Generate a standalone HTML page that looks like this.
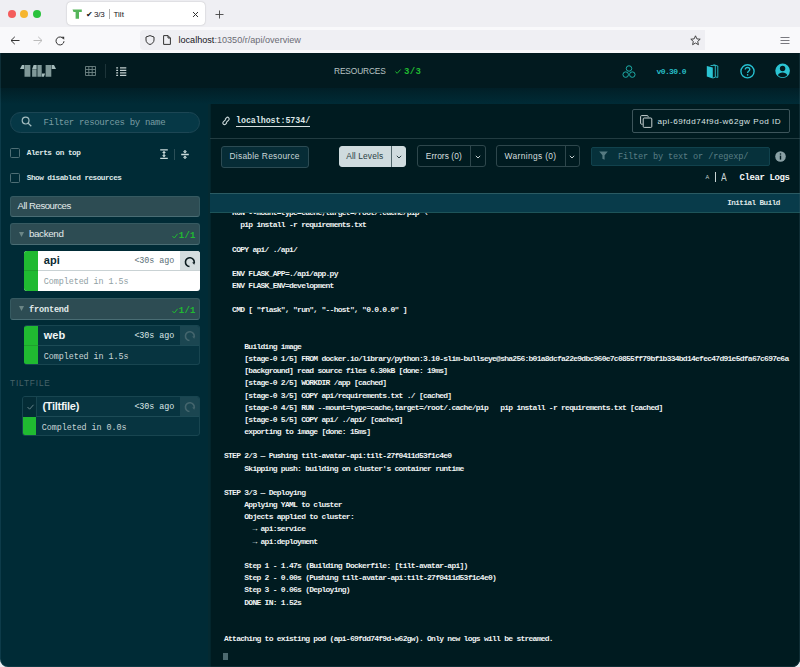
<!DOCTYPE html>
<html><head><meta charset="utf-8">
<style>
*{box-sizing:border-box;margin:0;padding:0}
html,body{width:800px;height:667px;overflow:hidden;background:#ececf0}
body{position:relative;font-family:"Liberation Sans",sans-serif}
.abs{position:absolute}
.mono{font-family:"Liberation Mono",monospace}
svg{position:absolute;overflow:visible}
#tabstrip{left:0;top:0;width:800px;height:27px;background:#efeff3}
.tl{position:absolute;top:9.5px;width:8px;height:8px;border-radius:50%}
#tab{left:67px;top:2px;width:138px;height:23px;background:#fff;border-radius:4px;box-shadow:0 0 1.5px rgba(0,0,0,.3)}
#toolbar{left:0;top:27px;width:800px;height:26px;background:#f9f9fb}
#url{left:140px;top:30px;width:565px;height:20px;background:#efeff3;border-radius:4px 0 0 4px}
.t{position:absolute;white-space:pre;line-height:1}
#app{left:0;top:53px;width:800px;height:614px;background:#002b36;border-radius:0 0 8px 8px;overflow:hidden}
#hdr{left:0;top:0;width:800px;height:35px;background:#021a1f}
#shadow{left:0;top:35px;width:800px;height:16px;background:linear-gradient(#011f27,#002b36)}
#side{left:0;top:35px;width:210px;height:579px}
#pane{left:210px;top:51px;width:590px;height:563px;background:#001b20}

.cb{position:absolute;width:10px;height:10px;border:1.2px solid #4e6e75;border-radius:1.5px}
.lbl{position:absolute;white-space:pre;line-height:1;font-family:"Liberation Mono",monospace;color:#e6eded}
.grp{position:absolute;left:10px;width:190px;height:22.5px;background:#2d4c53;border:1px solid #365a61;border-bottom-color:#4a6d74;border-radius:3px}
.card{position:absolute;width:176px;height:40px;border-radius:3px;overflow:hidden}
.gbar{position:absolute;left:0;width:14px;background:#20ba31}

.btn{position:absolute;border:1px solid #2f4a50;border-radius:3px}
.chev{position:absolute}
#log{position:absolute;left:14px;top:0;font-family:"Liberation Mono",monospace;font-size:8px;letter-spacing:-0.74px;line-height:12.165px;white-space:pre;color:#eef2f2;font-weight:bold}
</style></head><body>
<div id="tabstrip" class="abs">
  <div class="tl" style="left:8px;background:#f45c5c"></div>
  <div class="tl" style="left:20px;background:#f6b52e"></div>
  <div class="tl" style="left:33px;background:#2ac23c"></div>
</div>
<div id="tab" class="abs">
  <svg style="left:5px;top:7px" width="10" height="10" viewBox="0 0 10 10"><path d="M0.5 0.5 H9.8 V3 H7 V9.8 H3.6 V3 H1.5 Z" fill="#55b55a"/></svg>
  <div class="t" style="left:18.5px;top:8.5px;font-size:8px;color:#15141a">✔</div>
  <div class="t" id="tabtxt" style="left:27px;top:8.5px;font-size:8px;color:#15141a;letter-spacing:-0.2px">3/3</div>
  <div class="abs" style="left:41.5px;top:7px;width:1px;height:10px;background:#b0b0b0"></div>
  <div class="t" style="left:46.5px;top:8.5px;font-size:8px;color:#15141a">Tilt</div>
  <svg style="left:125px;top:9px" width="7" height="7" viewBox="0 0 7 7"><path d="M1 1L6 6M6 1L1 6" stroke="#333" stroke-width="1"/></svg>
</div>
<svg style="left:215px;top:10px" width="9" height="9" viewBox="0 0 9 9"><path d="M4.5 0.5V8.5M0.5 4.5H8.5" stroke="#444" stroke-width="0.9"/></svg>
<div id="toolbar" class="abs"></div>
<svg style="left:10px;top:36px" width="10" height="9" viewBox="0 0 10 9"><path d="M9.5 4.5H1M4.8 0.8L1 4.5L4.8 8.2" stroke="#333" stroke-width="1" fill="none"/></svg>
<svg style="left:33px;top:36px" width="10" height="9" viewBox="0 0 10 9"><path d="M0.5 4.5H9M5.2 0.8L9 4.5L5.2 8.2" stroke="#bbb" stroke-width="1" fill="none"/></svg>
<svg style="left:55px;top:36px" width="10" height="10" viewBox="0 0 10 10"><path d="M8.6 3.2A4 4 0 1 0 9 5.2" stroke="#333" stroke-width="1" fill="none"/><path d="M6.5 0.8L9.2 0.8L9.2 3.6Z" fill="#333"/></svg>
<div id="url" class="abs">
  <svg style="left:5px;top:5px" width="10" height="10" viewBox="0 0 10 10"><path d="M5 0.6L9 2V5C9 7.3 7.2 8.8 5 9.5C2.8 8.8 1 7.3 1 5V2Z" stroke="#333" stroke-width="1" fill="none"/></svg>
  <svg style="left:23px;top:5px" width="8" height="10" viewBox="0 0 8 10"><path d="M0.6 0.6H5L7.4 3V9.4H0.6Z M5 0.6V3H7.4" stroke="#333" stroke-width="1" fill="none"/></svg>
  <div class="t" id="urltxt" style="left:38.5px;top:6px;font-size:9.1px;color:#15141a">localhost<span style="color:#6b6b74">:10350/r/api/overview</span></div>
  <svg style="left:550px;top:5px" width="11" height="11" viewBox="0 0 11 11"><path d="M5.5 0.8L6.9 3.9L10.2 4.2L7.7 6.4L8.4 9.7L5.5 8L2.6 9.7L3.3 6.4L0.8 4.2L4.1 3.9Z" stroke="#333" stroke-width="0.9" fill="none" stroke-linejoin="round"/></svg>
</div>
<svg style="left:780px;top:36px" width="10" height="9" viewBox="0 0 10 9"><path d="M0.5 1.5H9.5M0.5 4.5H9.5M0.5 7.5H9.5" stroke="#6a6a70" stroke-width="0.9"/></svg>
<div id="app" class="abs">
  <div id="hdr" class="abs">
    <svg style="left:19.8px;top:12px" width="36" height="12" viewBox="0 0 36 12">
      <path d="M0 3.9H4.1V0H2Z" fill="#a5bcbc"/><path d="M4.5 0H10.4V11.8H4.5Z" fill="#7f9898"/>
      <path d="M12.1 3.9H16.6V0H13.6Z" fill="#a5bcbc"/><path d="M12.1 4.3H16.6V11.8H12.1Z" fill="#7f9898"/>
      <path d="M17.4 0H21.7V11.8H17.4Z" fill="#7f9898"/><path d="M22 11.8V8.6H25.1L23.9 11.8Z" fill="#a5bcbc"/>
      <path d="M25.6 0H31.3V11.8H25.6Z" fill="#7f9898"/><path d="M31.7 0H34L36 3.9H31.7Z" fill="#a5bcbc"/>
    </svg>
    <svg style="left:85px;top:12.8px" width="11" height="10" viewBox="0 0 11 10"><path d="M0.5 0.5H10.5V9.5H0.5Z M3.8 0.5V9.5 M7.2 0.5V9.5 M0.5 3.5H10.5 M0.5 6.5H10.5" stroke="#6f8585" stroke-width="0.9" fill="none"/></svg>
    <div class="abs" style="left:105px;top:11px;width:1px;height:14px;background:#1d3439"></div>
    <svg style="left:116px;top:13.5px" width="11" height="10" viewBox="0 0 11 10"><path d="M0.2 0.9H2.1M4 0.9H10.3M0.2 3.4H2.1M4 3.4H10.3M0.2 5.9H2.1M4 5.9H10.3M0.2 8.4H2.1M4 8.4H10.3" stroke="#c4d0d0" stroke-width="1.2" fill="none"/></svg>
    <div class="t" id="restxt" style="left:334px;top:13.6px;font-size:8.4px;color:#b9c4c4;letter-spacing:-0.15px">RESOURCES</div>
    <svg style="left:395px;top:16px" width="6" height="5" viewBox="0 0 6 5"><path d="M0.4 2.6L2.2 4.3L5.6 0.5" stroke="#20ba31" stroke-width="1" fill="none"/></svg>
    <div class="t mono" id="res33" style="left:404px;top:14.5px;font-size:9px;font-weight:bold;color:#20ba31;letter-spacing:0.3px">3/3</div>
    <svg style="left:622px;top:11.5px" width="14" height="14" viewBox="0 0 14 14"><circle cx="7" cy="3.5" r="2.75" stroke="#1fb3ae" stroke-width="0.95" fill="none"/><circle cx="3.7" cy="9.6" r="2.75" stroke="#1fb3ae" stroke-width="0.95" fill="none"/><circle cx="10.3" cy="9.6" r="2.75" stroke="#1fb3ae" stroke-width="0.95" fill="none"/></svg>
    <div class="t mono" id="ver" style="left:656.5px;top:14.7px;font-size:8px;font-weight:bold;color:#27bdc6;letter-spacing:-0.6px">v0.30.0</div>
    <svg style="left:706px;top:11px" width="13" height="15" viewBox="0 0 13 15"><path d="M4.5 1.6L9.3 1.2V13.2L7 14" stroke="#2fc2cf" stroke-width="0.9" fill="none"/><path d="M7.5 0.8L11.8 2V13.4L9.6 13" stroke="#2fc2cf" stroke-width="0.9" fill="none"/><path d="M0.8 2L6.8 3.6V14.6L0.8 12.6Z" fill="#2bc4d3"/></svg>
    <svg style="left:740px;top:11px" width="15" height="15" viewBox="0 0 15 15"><circle cx="7.5" cy="7.3" r="6.6" stroke="#26bfcf" stroke-width="1.4" fill="none"/><path d="M5.2 5.6C5.2 4.2 6.2 3.5 7.5 3.5C8.8 3.5 9.8 4.3 9.8 5.5C9.8 6.9 7.6 7.1 7.6 8.9" stroke="#26bfcf" stroke-width="1.3" fill="none"/><circle cx="7.6" cy="10.9" r="0.8" fill="#26bfcf"/></svg>
    <svg style="left:775px;top:10px" width="16" height="16" viewBox="0 0 16 16"><circle cx="7.6" cy="7.8" r="7.3" fill="#2bc4d3"/><circle cx="7.6" cy="5.5" r="2.7" fill="#021a1f"/><path d="M2.9 12.2C3.6 10.5 5.4 9.5 7.6 9.5C9.8 9.5 11.6 10.5 12.3 12.2A6.2 6.2 0 0 1 2.9 12.2Z" fill="#021a1f"/></svg>
  </div>
  <div id="shadow" class="abs"></div>
  <div id="side" class="abs">
    <div class="abs" style="left:10px;top:24px;width:190px;height:21px;border-radius:11px;background:#063846;border:1px solid #1c4654"></div>
    <svg style="left:21px;top:28px" width="12" height="12" viewBox="0 0 12 12"><circle cx="4.6" cy="4.6" r="3.4" stroke="#a3bcbf" stroke-width="1.2" fill="none"/><path d="M7.1 7.1L10.3 10.3" stroke="#a3bcbf" stroke-width="1.3"/></svg>
    <div class="lbl" id="filt" style="left:43.5px;top:31px;font-size:9px;letter-spacing:-0.33px;color:#7a9da3">Filter resources by name</div>
    <div class="cb" style="left:10px;top:60px"></div>
    <div class="lbl" id="alerts" style="left:26.8px;top:62px;font-size:7.7px;letter-spacing:-0.5px;font-weight:bold;color:#dfe8e8">Alerts on top</div>
    <svg style="left:160px;top:61px" width="8" height="10" viewBox="0 0 8 10"><path d="M0.2 0.8H7.8M0.2 9.4H7.8M4 3V7" stroke="#c9dada" stroke-width="1.2" fill="none"/><path d="M4 1.8L2.1 3.9H5.9Z M4 8.4L2.1 6.3H5.9Z" fill="#c9dada"/></svg>
    <div class="abs" style="left:174px;top:61px;width:1px;height:11px;background:#2a4e57"></div>
    <svg style="left:181px;top:62px" width="8" height="9" viewBox="0 0 8 9"><path d="M0.2 4.5H7.8M4 0V1.6M4 7.4V9" stroke="#c9dada" stroke-width="1.3" fill="none"/><path d="M4 3.5L1.8 1.2H6.2Z M4 5.5L1.8 7.8H6.2Z" fill="#c9dada"/></svg>
    <div class="cb" style="left:10px;top:84.5px"></div>
    <div class="lbl" id="showdis" style="left:26.8px;top:86.5px;font-size:7.7px;letter-spacing:-0.5px;font-weight:bold;color:#dfe8e8">Show disabled resources</div>
    <div class="abs" style="left:10px;top:107.5px;width:190px;height:21.5px;background:#2d4c53;border:1px solid #365a61;border-bottom-color:#4a6d74;border-radius:3px"></div>
    <div class="t" id="allres" style="left:17.5px;top:113px;font-size:9.6px;letter-spacing:-0.45px;color:#e3ebeb">All Resources</div>

    <div class="grp" style="top:134.8px"></div>
    <svg style="left:18.8px;top:144px" width="5" height="5" viewBox="0 0 5 5"><path d="M0 0H5L2.5 5Z" fill="#6c8686"/></svg>
    <div class="t" id="backend" style="left:28.9px;top:140.5px;font-size:9.8px;letter-spacing:-0.35px;color:#e3ebeb">backend</div>
    <svg style="left:172px;top:144.5px" width="6" height="6" viewBox="0 0 6 6"><path d="M0.4 3L2.3 5L5.6 0.8" stroke="#20ba31" stroke-width="1" fill="none"/></svg>
    <div class="t mono" id="b11" style="left:178.7px;top:143.5px;font-size:9px;font-weight:bold;color:#20ba31;letter-spacing:0.3px">1/1</div>

    <div class="card" style="left:24px;top:163px;background:#fff">
      <div class="gbar" style="top:0;height:40px"></div>
      <div class="abs" style="left:14px;top:19px;width:162px;height:1px;background:#c9d2d4"></div>
      <div class="abs" style="left:0;top:19px;width:14px;height:1px;background:#1fa02d"></div>
      <div class="t" id="apiname" style="left:19.8px;top:4px;font-size:11px;font-weight:bold;color:#0b2b33">api</div>
      <div class="t mono" id="apitime" style="left:110.4px;top:6px;font-size:8.4px;color:#586e75;letter-spacing:-0.05px">&lt;30s ago</div>
      <div class="abs" style="left:155.5px;top:0;width:20.5px;height:19px;background:#d4dddf"></div>
      <svg style="left:160px;top:4.5px" width="12" height="12" viewBox="0 0 12 12"><path d="M5.5 10.5A4.4 4.4 0 1 1 10.2 6.8" stroke="#0b1b1f" stroke-width="1.6" fill="none"/><path d="M8.2 6.4L11.2 6L10.2 8.8Z" fill="#0b1b1f"/></svg>
      <div class="t mono" id="apicomp" style="left:19.8px;top:27px;font-size:8.4px;color:#8fa0a3;letter-spacing:-0.05px">Completed in 1.5s</div>
    </div>
    <div class="grp" style="top:209.5px"></div>
    <svg style="left:18.5px;top:218px" width="5" height="5" viewBox="0 0 5 5"><path d="M0 0H5L2.5 5Z" fill="#6c8686"/></svg>
    <div class="lbl" id="frontend" style="left:28.9px;top:218px;font-size:8.6px;letter-spacing:-0.16px;font-weight:bold;color:#e3ebeb">frontend</div>
    <svg style="left:172px;top:219.5px" width="6" height="6" viewBox="0 0 6 6"><path d="M0.4 3L2.3 5L5.6 0.8" stroke="#20ba31" stroke-width="1" fill="none"/></svg>
    <div class="t mono" style="left:178.7px;top:218.5px;font-size:9px;font-weight:bold;color:#20ba31;letter-spacing:0.3px">1/1</div>

    <div class="card" style="left:24px;top:236.5px;height:40.5px;background:#073440;border:1px solid #184550;border-left:none">
      <div class="gbar" style="top:-1px;height:40px"></div>
      <div class="abs" style="left:14px;top:19.5px;width:162px;height:1px;background:#1d4b56"></div>
      <div class="abs" style="left:0;top:19.5px;width:14px;height:1px;background:#1fa02d"></div>
      <div class="t" id="webname" style="left:19.8px;top:4px;font-size:11px;font-weight:bold;color:#f2f6f6">web</div>
      <div class="t mono" style="left:110.4px;top:6px;font-size:8.4px;color:#dfe8e8;letter-spacing:-0.05px">&lt;30s ago</div>
      <div class="abs" style="left:155.5px;top:-1px;width:20.5px;height:20.5px;background:#1b4651"></div>
      <svg style="left:160px;top:4.5px" width="12" height="12" viewBox="0 0 12 12"><path d="M5.5 10.5A4.4 4.4 0 1 1 10.2 6.8" stroke="#44656d" stroke-width="1.6" fill="none"/><path d="M8.2 6.4L11.2 6L10.2 8.8Z" fill="#44656d"/></svg>
      <div class="t mono" style="left:19.8px;top:27px;font-size:8.4px;color:#cbd6d8;letter-spacing:-0.05px">Completed in 1.5s</div>
    </div>

    <div class="t" id="tiltlbl" style="left:10px;top:291.5px;font-size:8.2px;color:#48636a;letter-spacing:0.9px">TILTFILE</div>

    <div class="card" style="left:22px;top:307.5px;height:40.5px;width:178px;background:#073440;border:1px solid #184550">
      <div class="abs" style="left:-1px;top:-1px;width:14.5px;height:21px;background:#042c36;border-right:1px solid #184550"></div>
      <svg style="left:3.5px;top:7px" width="7" height="6" viewBox="0 0 7 6"><path d="M0.5 3L2.6 5.2L6.5 0.8" stroke="#6f8b91" stroke-width="0.9" fill="none"/></svg>
      <div class="gbar" style="left:-1px;top:20px;height:19.5px"></div>
      <div class="abs" style="left:13px;top:19.5px;width:165px;height:1px;background:#1d4b56"></div>
      <div class="t" id="tfname" style="left:19.5px;top:4px;font-size:11px;font-weight:bold;color:#f2f6f6;letter-spacing:-0.3px">(Tiltfile)</div>
      <div class="t mono" style="left:111.4px;top:6px;font-size:8.4px;color:#dfe8e8;letter-spacing:-0.05px">&lt;30s ago</div>
      <div class="abs" style="left:156.5px;top:-1px;width:20.5px;height:20.5px;background:#1b4651"></div>
      <svg style="left:161px;top:4.5px" width="12" height="12" viewBox="0 0 12 12"><path d="M5.5 10.5A4.4 4.4 0 1 1 10.2 6.8" stroke="#44656d" stroke-width="1.6" fill="none"/><path d="M8.2 6.4L11.2 6L10.2 8.8Z" fill="#44656d"/></svg>
      <div class="t mono" style="left:18.8px;top:27px;font-size:8.4px;color:#cbd6d8;letter-spacing:-0.05px">Completed in 0.0s</div>
    </div>
  </div>
  <div class="abs" style="left:208px;top:51px;width:3px;height:563px;background:#042a32"></div>
  <div id="pane" class="abs">
    <div class="abs" style="left:0;top:0;width:1px;height:563px;background:#03252c"></div>
    <svg style="left:12px;top:13px" width="8" height="8" viewBox="0 0 8 8"><path d="M3.6 2.6L1.3 4.9A1.6 1.6 0 0 0 3.6 7.2L4.6 6.2 M4.4 5.4L6.7 3.1A1.6 1.6 0 0 0 4.4 0.8L3.4 1.8" stroke="#c5d3d5" stroke-width="1.15" fill="none" stroke-linecap="round"/></svg>
    <div class="t mono" id="lh" style="left:26px;top:13px;font-size:8.3px;letter-spacing:-0.04px;color:#dde6e6;font-weight:bold">localhost:5734/</div>
    <div class="abs" style="left:26px;top:22px;width:74px;height:1px;background:#d5dfdf"></div>
    <div class="abs" style="left:421.8px;top:5px;width:158px;height:23.5px;border:1px solid #3d555b;border-radius:2px"></div>
    <svg style="left:430px;top:11px" width="13" height="13" viewBox="0 0 13 13"><path d="M8.2 2.2V1.6A1 1 0 0 0 7.2 0.6H1.6A1 1 0 0 0 0.6 1.6V8.2A1 1 0 0 0 1.6 9.2H2.6" stroke="#c8d2d2" stroke-width="1" fill="none"/><rect x="3.2" y="3" width="8.6" height="9.4" rx="1" stroke="#c8d2d2" stroke-width="1" fill="none"/></svg>
    <div class="t" id="podid" style="left:447.5px;top:14px;font-size:8.1px;letter-spacing:0.55px;color:#dbe4e4">api-69fdd74f9d-w62gw Pod ID</div>
    <div class="abs" style="left:0;top:34px;width:590px;height:1px;background:#223c41"></div>
    <div class="btn" style="left:10.5px;top:41.5px;width:88.5px;height:22px;background:#062c36;border-color:#2c4b53"></div>
    <div class="t" id="disres" style="left:19.5px;top:48.3px;font-size:8.4px;letter-spacing:0.26px;color:#cad6d8">Disable Resource</div>
    <div class="btn" style="left:129px;top:42px;width:67px;height:21px;background:#cfdbde;border-color:#cfdbde"></div>
    <div class="abs" style="left:180.5px;top:42px;width:1px;height:21px;background:#50666b"></div>
    <div class="t" id="alllev" style="left:136.2px;top:48.3px;font-size:8.4px;letter-spacing:0.12px;color:#2b3f44">All Levels</div>
    <svg class="chev" style="left:185.5px;top:51px" width="6" height="4" viewBox="0 0 6 4"><path d="M0.8 0.8L3 3L5.2 0.8" stroke="#2b3f44" stroke-width="1" fill="none"/></svg>
    <div class="btn" style="left:207.4px;top:41px;width:69px;height:22px;border-color:#2e474c"></div>
    <div class="abs" style="left:260.4px;top:41px;width:1px;height:22px;background:#2e474c"></div>
    <div class="t" id="errs" style="left:215.8px;top:48.3px;font-size:8.4px;letter-spacing:0.06px;color:#d5dfdf">Errors (0)</div>
    <svg class="chev" style="left:265px;top:51px" width="6" height="4" viewBox="0 0 6 4"><path d="M0.8 0.8L3 3L5.2 0.8" stroke="#c5d0d0" stroke-width="1" fill="none"/></svg>
    <div class="btn" style="left:286px;top:41px;width:83.5px;height:22px;border-color:#2e474c"></div>
    <div class="abs" style="left:354.7px;top:41px;width:1px;height:22px;background:#2e474c"></div>
    <div class="t" id="warns" style="left:294.6px;top:48.3px;font-size:8.4px;letter-spacing:0.35px;color:#d5dfdf">Warnings (0)</div>
    <svg class="chev" style="left:359px;top:51px" width="6" height="4" viewBox="0 0 6 4"><path d="M0.8 0.8L3 3L5.2 0.8" stroke="#c5d0d0" stroke-width="1" fill="none"/></svg>
    <div class="abs" style="left:380.5px;top:42.5px;width:179.5px;height:19px;background:#06313b;border:1px solid #11424d;border-radius:2px"></div>
    <svg style="left:389px;top:47px" width="9" height="9.5" viewBox="0 0 9 9"><path d="M0.2 0.3H8.8L5.6 3.9V8.6L3.4 7.4V3.9Z" fill="#557a81"/></svg>
    <div class="lbl" id="filt2" style="left:408px;top:48.5px;font-size:8.6px;letter-spacing:-0.15px;color:#5a7e85">Filter by text or /regexp/</div>
    <svg style="left:565px;top:46.5px" width="11" height="11" viewBox="0 0 11 11"><circle cx="5.5" cy="5.5" r="5.3" fill="#8aa1a5"/><rect x="4.8" y="4.6" width="1.4" height="4" fill="#001b20"/><circle cx="5.5" cy="3" r="0.8" fill="#001b20"/></svg>
    <div class="t" style="left:495.5px;top:70.5px;font-size:5.5px;color:#c9d4d4">A</div>
    <div class="abs" style="left:505px;top:68px;width:1px;height:10px;background:#c9d4d4"></div>
    <div class="t" style="left:511.4px;top:68.8px;font-size:10px;color:#c9d4d4;transform:scaleX(0.85);transform-origin:left">A</div>
    <div class="lbl" id="clr" style="left:529.5px;top:70px;font-size:9px;letter-spacing:-0.4px;font-weight:bold;color:#f4f7f7">Clear Logs</div>
    <div id="log" style="top:103px">  RUN --mount=type=cache,target=/root/.cache/pip \
    pip install -r requirements.txt

  COPY api/ ./api/

  ENV FLASK_APP=./api/app.py
  ENV FLASK_ENV=development

  CMD [ "flask", "run", "--host", "0.0.0.0" ]


     Building image
     [stage-0 1/5] FROM docker.io/library/python:3.10-slim-bullseye@sha256:b01a8dcfa22e9dbc960e7c0855ff79bf1b334bd14efec47d91e5dfa67c697e6a
     [background] read source files 6.30kB [done: 19ms]
     [stage-0 2/5] WORKDIR /app [cached]
     [stage-0 3/5] COPY api/requirements.txt ./ [cached]
     [stage-0 4/5] RUN --mount=type=cache,target=/root/.cache/pip   pip install -r requirements.txt [cached]
     [stage-0 5/5] COPY api/ ./api/ [cached]
     exporting to image [done: 15ms]

STEP 2/3 — Pushing tilt-avatar-api:tilt-27f0411d53f1c4e0
     Skipping push: building on cluster's container runtime

STEP 3/3 — Deploying
     Applying YAML to cluster
     Objects applied to cluster:
       → api:service
       → api:deployment

     Step 1 - 1.47s (Building Dockerfile: [tilt-avatar-api])
     Step 2 - 0.00s (Pushing tilt-avatar-api:tilt-27f0411d53f1c4e0)
     Step 3 - 0.06s (Deploying)
     DONE IN: 1.52s


Attaching to existing pod (api-69fdd74f9d-w62gw). Only new logs will be streamed.</div>
    <div class="abs" style="left:12.8px;top:548.7px;width:5.2px;height:7.8px;background:#4d6a70"></div>
    <div class="abs" style="left:0;top:88.8px;width:590px;height:20.2px;background:#083b4a;border-top:1px solid #2b5b63;border-bottom:1px solid #1d5459"></div>
    <div class="lbl" id="ib" style="left:517.2px;top:95.6px;font-size:7.6px;letter-spacing:-0.51px;font-weight:bold;color:#dfe7e7">Initial Build</div>
  </div>
  <div class="abs" style="left:0;top:0;width:800px;height:614px;border-radius:0 0 8px 8px;box-shadow:inset 1px 0 0 rgba(60,120,140,.22),inset -1px 0 0 rgba(60,100,110,.25),inset 0 -1px 0 rgba(60,100,110,.25)"></div>
</div>
</body></html>
